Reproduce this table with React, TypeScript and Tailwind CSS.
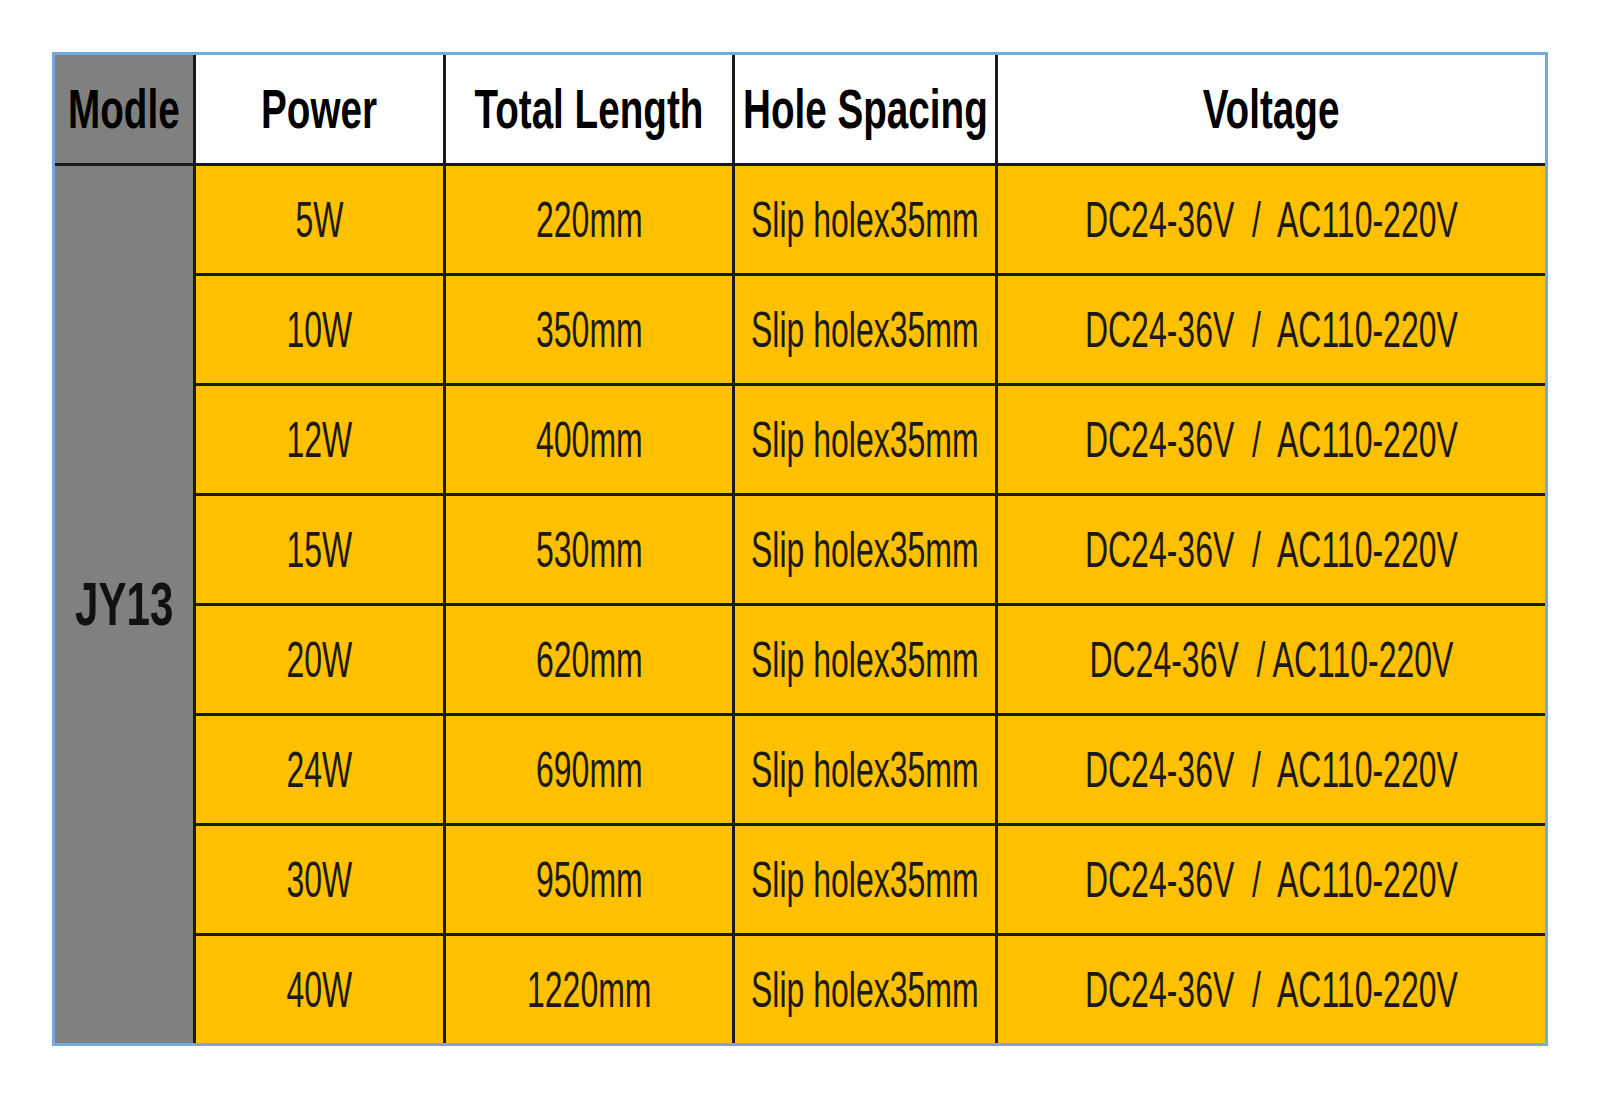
const rows = [
  { power: "5W", length: "220mm", volt: "DC24-36V  /  AC110-220V" },
  { power: "10W", length: "350mm", volt: "DC24-36V  /  AC110-220V" },
  { power: "12W", length: "400mm", volt: "DC24-36V  /  AC110-220V" },
  { power: "15W", length: "530mm", volt: "DC24-36V  /  AC110-220V" },
  { power: "20W", length: "620mm", volt: "DC24-36V  / AC110-220V" },
  { power: "24W", length: "690mm", volt: "DC24-36V  /  AC110-220V" },
  { power: "30W", length: "950mm", volt: "DC24-36V  /  AC110-220V" },
  { power: "40W", length: "1220mm", volt: "DC24-36V  /  AC110-220V" },
]

const Head = ({ children, gray }: { children: string; gray?: boolean }) => (
  <div className={`flex items-center justify-center overflow-visible ${gray ? "bg-[#808080]" : "bg-white"}`}>
    <span className="inline-block whitespace-pre text-[56px] leading-none font-bold text-black scale-x-[0.69]">
      {children}
    </span>
  </div>
)

const Cell = ({ children }: { children: string }) => (
  <div className="flex items-center justify-center bg-[#ffc000] overflow-visible">
    <span className="inline-block whitespace-pre text-[50px] leading-none text-[#1c1a14] scale-x-[0.64]">
      {children}
    </span>
  </div>
)

export default function App() {
  return (
    <div className="w-[1600px] h-[1099px] bg-white pt-[52px] pl-[52px] font-['Liberation_Sans',Arial,sans-serif]">
      <div className="w-[1496px] border-[3px] border-[#74a9de] bg-[#1a1a1a]">
        <div className="grid grid-cols-[138px_247px_286px_260px_547px] grid-rows-[108px_repeat(8,107px)] gap-[3px]">
          <Head gray>Modle</Head>
          <Head>Power</Head>
          <Head>Total Length</Head>
          <Head>Hole Spacing</Head>
          <Head>Voltage</Head>

          {/* model cell spans all data rows, no row lines */}
          <div className="row-span-8 flex items-center justify-center bg-[#808080]">
            <span className="inline-block text-[61px] leading-none font-bold text-[#111] scale-x-[0.69]">
              JY13
            </span>
          </div>

          {rows.map((r, i) => (
            <div key={i} className="contents">
              <Cell>{r.power}</Cell>
              <Cell>{r.length}</Cell>
              <Cell>Slip holex35mm</Cell>
              <Cell>{r.volt}</Cell>
            </div>
          ))}
        </div>
      </div>
    </div>
  )
}
